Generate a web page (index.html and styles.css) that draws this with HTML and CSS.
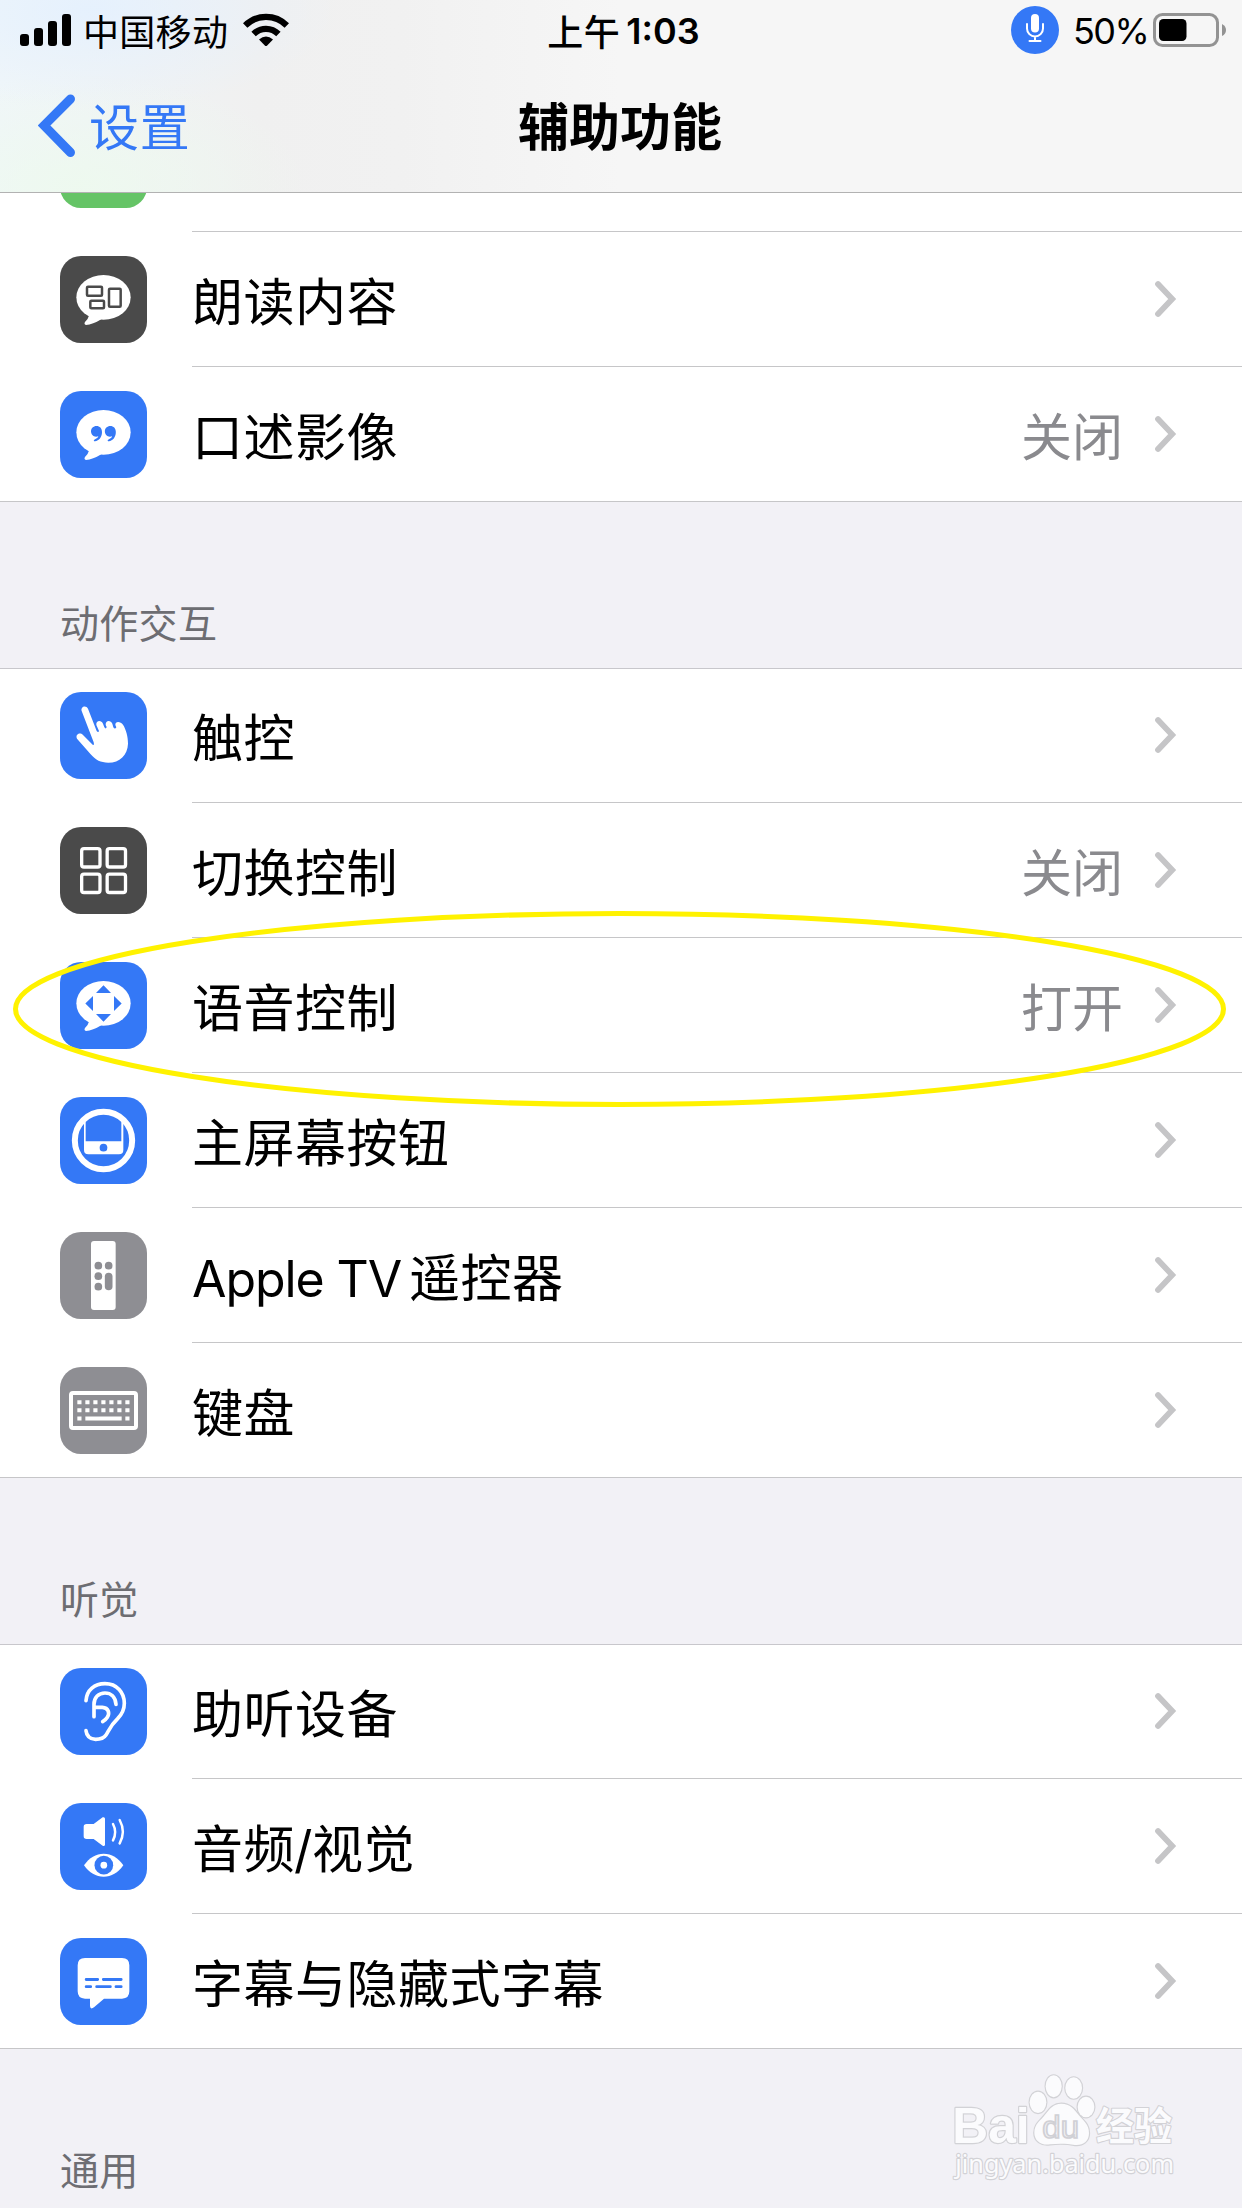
FILE: index.html
```html
<!DOCTYPE html>
<html lang="zh-CN">
<head>
<meta charset="utf-8">
<title>辅助功能</title>
<link rel="stylesheet" href="styles.css">
</head>
<body>
<svg class="defs" width="0" height="0" aria-hidden="true">
  <defs>
    <symbol id="chevron" viewBox="0 0 24 40"><path d="M4 5 18.200 20 4 35" fill="none" stroke="#c5c5c7" stroke-width="5.800" stroke-linecap="round" stroke-linejoin="miter"/></symbol>
    <symbol id="bubble" viewBox="0 0 261 261"><ellipse cx="130.500" cy="124" rx="81.500" ry="67"/><path d="M88 177Q84 190 75 198Q71 205 78 207Q98 206 124 190Z"/></symbol>
  </defs>
</svg>
<header class="header">
  <div class="status">
    <div class="status-left">
      <svg class="signal" viewBox="0 0 51 32"><rect y="20" width="9" height="12" rx="3"/><rect x="14" y="14" width="9" height="18" rx="3"/><rect x="28" y="7" width="9" height="25" rx="3"/><rect x="42" width="9" height="32" rx="3"/></svg>
      <span class="carrier">中国移动</span>
      <svg class="wifi" viewBox="0 0 46 34"><g fill="none" stroke="#000" stroke-width="6.200"><path d="M2.200 12.500A29.500 29.500 0 0 1 43.800 12.500"/><path d="M10.600 21A17.500 17.500 0 0 1 35.400 21"/></g><path d="M16 26.500Q23 20.500 30 26.500L24.200 32.500Q23 33.700 21.800 32.500Z"/></svg>
    </div>
    <div class="time"><span>上午</span><b>1:03</b></div>
    <div class="status-right">
      <svg class="mic" viewBox="0 0 48 48"><circle cx="24" cy="24" r="24" fill="#3478f6"/><rect x="20" y="8" width="8" height="18.500" rx="4" fill="#fff"/><path d="M16 18v4.500a8 8 0 0 0 16 0V18M24 30.500V35M18.500 35h11" fill="none" stroke="#fff" stroke-width="2" stroke-linecap="round"/></svg>
      <span class="percent">50%</span>
      <svg class="battery" viewBox="0 0 74 34"><rect x="1.500" y="1.500" width="63" height="31" rx="8" fill="none" stroke="#939393" stroke-width="3"/><rect x="6" y="6" width="27.500" height="22" rx="4.500"/><path d="M69 11q4 2 4 6t-4 6z" fill="#939393"/></svg>
    </div>
  </div>
  <nav class="nav">
    <a class="back"><svg viewBox="0 0 38 64"><path d="M32.500 5 6 31.500 32.500 58.500" fill="none" stroke="#3478f6" stroke-width="9" stroke-linecap="round"/></svg><span>设置</span></a>
    <h1>辅助功能</h1>
  </nav>
</header>
<main>
  <section class="group first">
    <div class="row peek"><i class="icon green"></i></div>
    <div class="row">
      <svg class="icon dark" viewBox="0 0 261 261"><use href="#bubble"/><g fill="none" stroke="#4a4a4a" stroke-width="7.500"><rect x="81" y="92" width="45" height="27" rx="3"/><rect x="91" y="134" width="41" height="23" rx="3"/><rect x="147" y="98" width="35" height="54" rx="3"/></g></svg>
      <span class="label">朗读内容</span><svg class="chevron"><use href="#chevron"/></svg>
    </div>
    <div class="row">
      <svg class="icon blue" viewBox="0 0 261 261"><use href="#bubble"/><g fill="#3478f6"><path id="q" d="M109.500 105C119 105 126 112 126 123C126 139 117 149 105 151Q99 150 103 146C110 143 114 140 115 136C102 140 93 132 93 121C93 112 100 105 109.500 105Z"/><use href="#q" x="41.500"/></g></svg>
      <span class="label">口述影像</span><span class="value">关闭</span><svg class="chevron"><use href="#chevron"/></svg>
    </div>
  </section>
  <h2>动作交互</h2>
  <section class="group">
    <div class="row">
      <svg class="icon blue" viewBox="0 0 261 261"><path d="M65 57C61 44 78 38 84 50L110 117Q115 123 117 117L109 99C107 85 124 83 129 95L133 106Q138 113 140 105L137 99C136 84 152 83 157 95L160 106Q165 113 169 106L166 99C165 87 181 87 189 98C198 112 204 133 204 155C203 189 179 212 145 212C121 212 108 205 92 187L51 140C45 128 59 119 69 129L98 158Q104 161 101 151Z"/></svg>
      <span class="label">触控</span><svg class="chevron"><use href="#chevron"/></svg>
    </div>
    <div class="row">
      <svg class="icon dark" viewBox="0 0 261 261"><g fill="none" stroke="#fff" stroke-width="10"><rect x="65" y="65" width="55" height="55" rx="7"/><rect x="141.500" y="65" width="55" height="55" rx="7"/><rect x="65" y="141.500" width="55" height="55" rx="7"/><rect x="141.500" y="141.500" width="55" height="55" rx="7"/></g></svg>
      <span class="label">切换控制</span><span class="value">关闭</span><svg class="chevron"><use href="#chevron"/></svg>
    </div>
    <div class="row">
      <svg class="icon blue" viewBox="0 0 261 261"><use href="#bubble"/><path fill="#3478f6" d="M108 93 130.500 70 153 93ZM108 156H153L130.500 179ZM99 102V147L76 124.500ZM162 102 185 124.500 162 147Z"/></svg>
      <span class="label">语音控制</span><span class="value">打开</span><svg class="chevron"><use href="#chevron"/></svg>
    </div>
    <div class="row">
      <svg class="icon blue" viewBox="0 0 261 261"><path d="M72 75H77V133H184V75H190V159Q190 172 177 172H85Q72 172 72 159Z"/><circle cx="130.500" cy="152" r="11.500" fill="#3478f6"/><circle cx="130.500" cy="130.500" r="86" fill="none" stroke="#fff" stroke-width="18"/></svg>
      <span class="label">主屏幕按钮</span><svg class="chevron"><use href="#chevron"/></svg>
    </div>
    <div class="row">
      <svg class="icon gray" viewBox="0 0 261 261"><rect x="93" y="27" width="74" height="207" rx="9"/><g fill="#8e8e93"><circle cx="115" cy="101" r="11.500"/><circle cx="146" cy="101" r="11.500"/><circle cx="115" cy="132.500" r="11.500"/><circle cx="115" cy="164" r="11.500"/><rect x="134.500" y="122" width="23" height="53" rx="11.500"/></g></svg>
      <span class="label"><span class="latin">Apple TV</span>遥控器</span><svg class="chevron"><use href="#chevron"/></svg>
    </div>
    <div class="row">
      <svg class="icon gray" viewBox="0 0 261 261"><rect x="33" y="78" width="195" height="105" rx="6" fill="none" stroke="#fff" stroke-width="12"/><g fill="none" stroke="#fff" stroke-width="12"><path d="M52 105.500H210M52 130H210" stroke-dasharray="12.500 11.500"/><path d="M52 154.500H64.500M76 154.500H185M196 154.500H208.500"/></g></svg>
      <span class="label">键盘</span><svg class="chevron"><use href="#chevron"/></svg>
    </div>
  </section>
  <h2>听觉</h2>
  <section class="group">
    <div class="row">
      <svg class="icon blue" viewBox="0 0 261 261"><g fill="none" stroke="#fff" stroke-width="11" stroke-linecap="round"><path d="M78 98C80 66 104 47 135 47C171 47 193 74 193 106C193 125 186 139 173 152C151 173 147 187 138 201C130 213 119 214 107 214C90 213 80 205 78 188"/><path d="M102 146V109C102 88 116 75 135 75C153 75 166 87 168 109M103 118H127C146 119 150 136 142 148Q137 156 128 161"/></g></svg>
      <span class="label">助听设备</span><svg class="chevron"><use href="#chevron"/></svg>
    </div>
    <div class="row">
      <svg class="icon blue" viewBox="0 0 261 261"><path d="M80 63H101L128 43Q135 41 135 47V125Q134 131 128 128L101 108H80Q71 108 71 100V71Q71 63 80 63Z"/><path d="M159 63Q172 87 159 112M179 51Q198 86 179 121" fill="none" stroke="#fff" stroke-width="7.500" stroke-linecap="round"/><path d="M72 187C88 164 108 152 131 152C155 152 175 165 190 187C174 210 154 221 131 221C108 221 88 210 72 187Z"/><circle cx="131.500" cy="186.500" r="28" fill="#3478f6"/><circle cx="131.500" cy="186.500" r="10"/></svg>
      <span class="label">音频<span class="slash">/</span>视觉</span><svg class="chevron"><use href="#chevron"/></svg>
    </div>
    <div class="row">
      <svg class="icon blue" viewBox="0 0 261 261"><path d="M75 60H186Q208 60 208 82V160Q208 182 186 182H132L102 208Q91 216 90 204V182H75Q53 182 53 160V82Q53 60 75 60Z"/><path d="M78.500 124.500H113M130 124.500H183.500M78.500 146H92M110 146H151M168 146H183.500" fill="none" stroke="#3478f6" stroke-width="8.500" stroke-linecap="round"/></svg>
      <span class="label">字幕与隐藏式字幕</span><svg class="chevron"><use href="#chevron"/></svg>
    </div>
  </section>
  <h2>通用</h2>
</main>
<svg class="highlight" viewBox="0 0 1242 220"><ellipse cx="619.500" cy="109" rx="604" ry="95.500" fill="none" stroke="#fff200" stroke-width="5"/></svg>
<svg class="watermark" viewBox="0 0 1026 504">
  <g fill="#fbfbfd" stroke="#d2d2d6" stroke-width="7" paint-order="stroke" stroke-linejoin="round">
    <text class="wm-latin" x="157" y="310" font-size="148" textLength="232" lengthAdjust="spacingAndGlyphs">Bai</text>
    <ellipse cx="414" cy="187" rx="25" ry="32"/><ellipse cx="461" cy="139" rx="24" ry="33"/><ellipse cx="521" cy="144" rx="25" ry="32"/><ellipse cx="558" cy="201" rx="25" ry="31"/>
    <path d="M484 191C510 191 523 208 536 225C552 244 567 254 567 279C567 304 549 317 525 315C499 310 475 310 450 313C423 317 403 302 403 278C403 252 421 242 435 224C449 207 459 191 484 191Z"/>
    <text class="wm-cjk" x="588" y="299" font-size="116" textLength="228" lengthAdjust="spacingAndGlyphs">经验</text>
    <text class="wm-url" x="166" y="399" font-size="76" textLength="656" lengthAdjust="spacingAndGlyphs">jingyan.baidu.com</text>
  </g>
  <text class="wm-du" x="427" y="294" font-size="92" textLength="110" lengthAdjust="spacingAndGlyphs">du</text>
</svg>
</body>
</html>
```
FILE: styles.css
```css
* { box-sizing: border-box; }

body {
  position: relative;
  width: 1242px;
  height: 2208px;
  margin: 0;
  overflow: hidden;
  background: #f2f1f6;
  color: #000;
  font-family: Inter, "Noto Sans CJK SC", sans-serif;
}

svg { display: block; }
.defs { position: absolute; }

.header {
  height: 193px;
  border-bottom: 1px solid #b2b2b2;
  background:
    radial-gradient(ellipse 250px 100px at 90px 10px, #e3f0ffd0, #e3f0ff00),
    radial-gradient(ellipse 230px 110px at 80px 185px, #edfaedd0, #edfaed00),
    linear-gradient(90deg, #f0f6f9 0, #f0f0f0 260px, #f1f1f1 400px, #f6f6f6 620px);
}

.status {
  display: grid;
  grid-template-columns: 1fr auto 1fr;
  height: 60px;
  padding: 0 15px 0 20px;
}
.status-left, .status-right { display: flex; align-items: flex-start; }
.status-right { justify-content: flex-end; }
.signal { width: 51px; height: 32px; margin-top: 14px; }
.carrier {
  margin: 4px 0 0 12px;
  font: 36px/52px "Noto Sans CJK SC", sans-serif;
  letter-spacing: .3px;
}
.wifi { width: 46px; height: 34px; margin: 13px 0 0 15px; }
.time { display: flex; padding-top: 4px; font-size: 36px; line-height: 52px; }
.time span { font-family: "Noto Sans CJK SC", sans-serif; font-weight: 500; letter-spacing: .5px; }
.time b { margin: 1px 0 0 6px; font-weight: 600; }
.mic { width: 48px; height: 48px; margin-top: 6px; }
.percent {
  width: 71px;
  margin: 5px 9px 0 14px;
  font-size: 36px;
  line-height: 52px;
  letter-spacing: -1.6px;
  white-space: nowrap;
}
.battery { width: 74px; height: 34px; margin-top: 13px; }

.nav {
  display: grid;
  grid-template-columns: 1fr auto 1fr;
  align-items: center;
  height: 132px;
  padding: 0 38px;
  font-family: "Noto Sans CJK SC", sans-serif;
}
.back { display: flex; align-items: center; color: #3478f6; font-size: 50px; line-height: 66px; letter-spacing: .8px; }
.back svg { width: 38px; height: 64px; margin-right: 13px; }
.back span { padding-bottom: 5px; }
.nav h1 { margin: 0; padding: 0 2px 5px 0; font-size: 51px; line-height: 66px; font-weight: 700; }

.group { background: #fff; box-shadow: inset 0 1px #c8c7cc; }
.group.first { box-shadow: none; }
.row {
  display: flex;
  height: 135px;
  padding: 24px 64px 0 60px;
  background: linear-gradient(#c6c6c8, #c6c6c8) 192px 100% / 1050px 1px no-repeat;
}
.row:last-child { background-position: 0 100%; background-size: 1242px 1px; }
.row.peek { height: 39px; padding-top: 0; align-items: flex-start; overflow: hidden; }
.icon { flex: none; width: 87px; height: 87px; border-radius: 21px; fill: #fff; }
.blue { background: #3478f6; }
.dark { background: #4a4a4a; }
.gray { background: #8e8e93; }
.green { margin-top: -72px; background: #65c466; }
.label {
  flex: 1;
  margin: 7px 0 0 45px;
  font-size: 51px;
  line-height: 80px;
  letter-spacing: .5px;
  white-space: nowrap;
}
.latin { margin-right: 8px; font-size: 50px; letter-spacing: -1.1px; }
.slash { margin: 0 -1px; }
.value { margin: 7px 31px 0 0; color: #8a8a8e; font-size: 51px; line-height: 80px; }
.chevron { flex: none; width: 24px; height: 40px; margin-top: 23px; }

h2 {
  height: 166px;
  margin: 0;
  padding: 91px 60px 0;
  color: #6d6d72;
  font: 39px/56px "Noto Sans CJK SC", sans-serif;
  letter-spacing: .3px;
}

.highlight { position: absolute; left: 0; top: 900px; width: 1242px; height: 220px; }
.watermark { position: absolute; left: 900px; top: 2040px; width: 342px; height: 168px; }
.wm-latin { font-family: "Liberation Sans", sans-serif; font-weight: 700; }
.wm-cjk { font-family: "Noto Sans CJK SC", sans-serif; font-weight: 700; }
.wm-url { font-family: "Noto Sans", sans-serif; }
.wm-du { font-family: "Liberation Sans", sans-serif; fill: #f2f2f6; stroke: #d0d0d5; stroke-width: 5; }
```
